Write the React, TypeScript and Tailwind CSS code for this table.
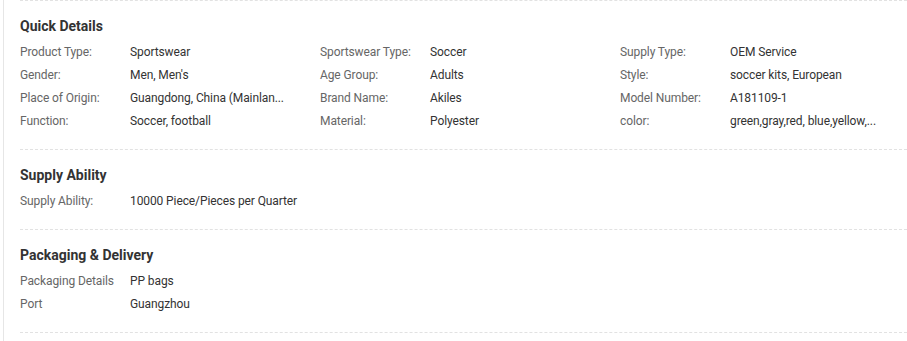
import React from "react";

interface Item {
  label: string;
  value: string;
}

interface Section {
  title: string;
  cols: number;
  items: Item[];
}

// long values come already shortened, same as the listing page shows them
const Sections: Section[] = [
  {
    title: "Quick Details",
    cols: 3,
    items: [
      { label: "Product Type:", value: "Sportswear" },
      { label: "Sportswear Type:", value: "Soccer" },
      { label: "Supply Type:", value: "OEM Service" },
      { label: "Gender:", value: "Men, Men's" },
      { label: "Age Group:", value: "Adults" },
      { label: "Style:", value: "soccer kits, European" },
      { label: "Place of Origin:", value: "Guangdong, China (Mainlan..." },
      { label: "Brand Name:", value: "Akiles" },
      { label: "Model Number:", value: "A181109-1" },
      { label: "Function:", value: "Soccer, football" },
      { label: "Material:", value: "Polyester" },
      { label: "color:", value: "green,gray,red, blue,yellow,..." },
    ],
  },
  {
    title: "Supply Ability",
    cols: 1,
    items: [{ label: "Supply Ability:", value: "10000 Piece/Pieces per Quarter" }],
  },
  {
    title: "Packaging & Delivery",
    cols: 1,
    items: [
      { label: "Packaging Details", value: "PP bags" },
      { label: "Port", value: "Guangzhou" },
    ],
  },
];

const Row = ({ item, wide }: { item: Item; wide?: boolean }) => {
  return (
    <div className={`${wide ? "w-[600px]" : "w-[300px]"} h-[23px] flex items-center`}>
      <div className="w-[110px] shrink-0 text-[#666] whitespace-nowrap">{item.label}</div>
      <div className="text-[#333] whitespace-nowrap">{item.value}</div>
    </div>
  );
};

const App = () => {
  return (
    <div
      className="w-[907px] h-[341px] bg-white overflow-hidden"
      style={{ fontFamily: "Roboto, 'Liberation Sans', sans-serif" }}
    >
      <div className="ml-[3px] h-full border-l border-[#e6e6e6] pl-[16px]">
        <div className="border-b border-dashed border-[#e2e2e2]" />
        {Sections.map((section, id: number) => {
          return (
            <div key={id} className="pt-[15px] pb-[17px] border-b border-dashed border-[#e2e2e2]">
              <h3 className="text-[14px] leading-[20px] font-bold text-[#333] mb-[4px]">
                {section.title}
              </h3>
              <div
                className={`${section.cols === 3 ? "flex flex-wrap" : "flex flex-col"} w-[900px] text-[12px] tracking-[-0.1px]`}
              >
                {section.items.map((item, i: number) => (
                  <Row key={i} item={item} wide={section.cols === 1} />
                ))}
              </div>
            </div>
          );
        })}
      </div>
    </div>
  );
};

export default App;
